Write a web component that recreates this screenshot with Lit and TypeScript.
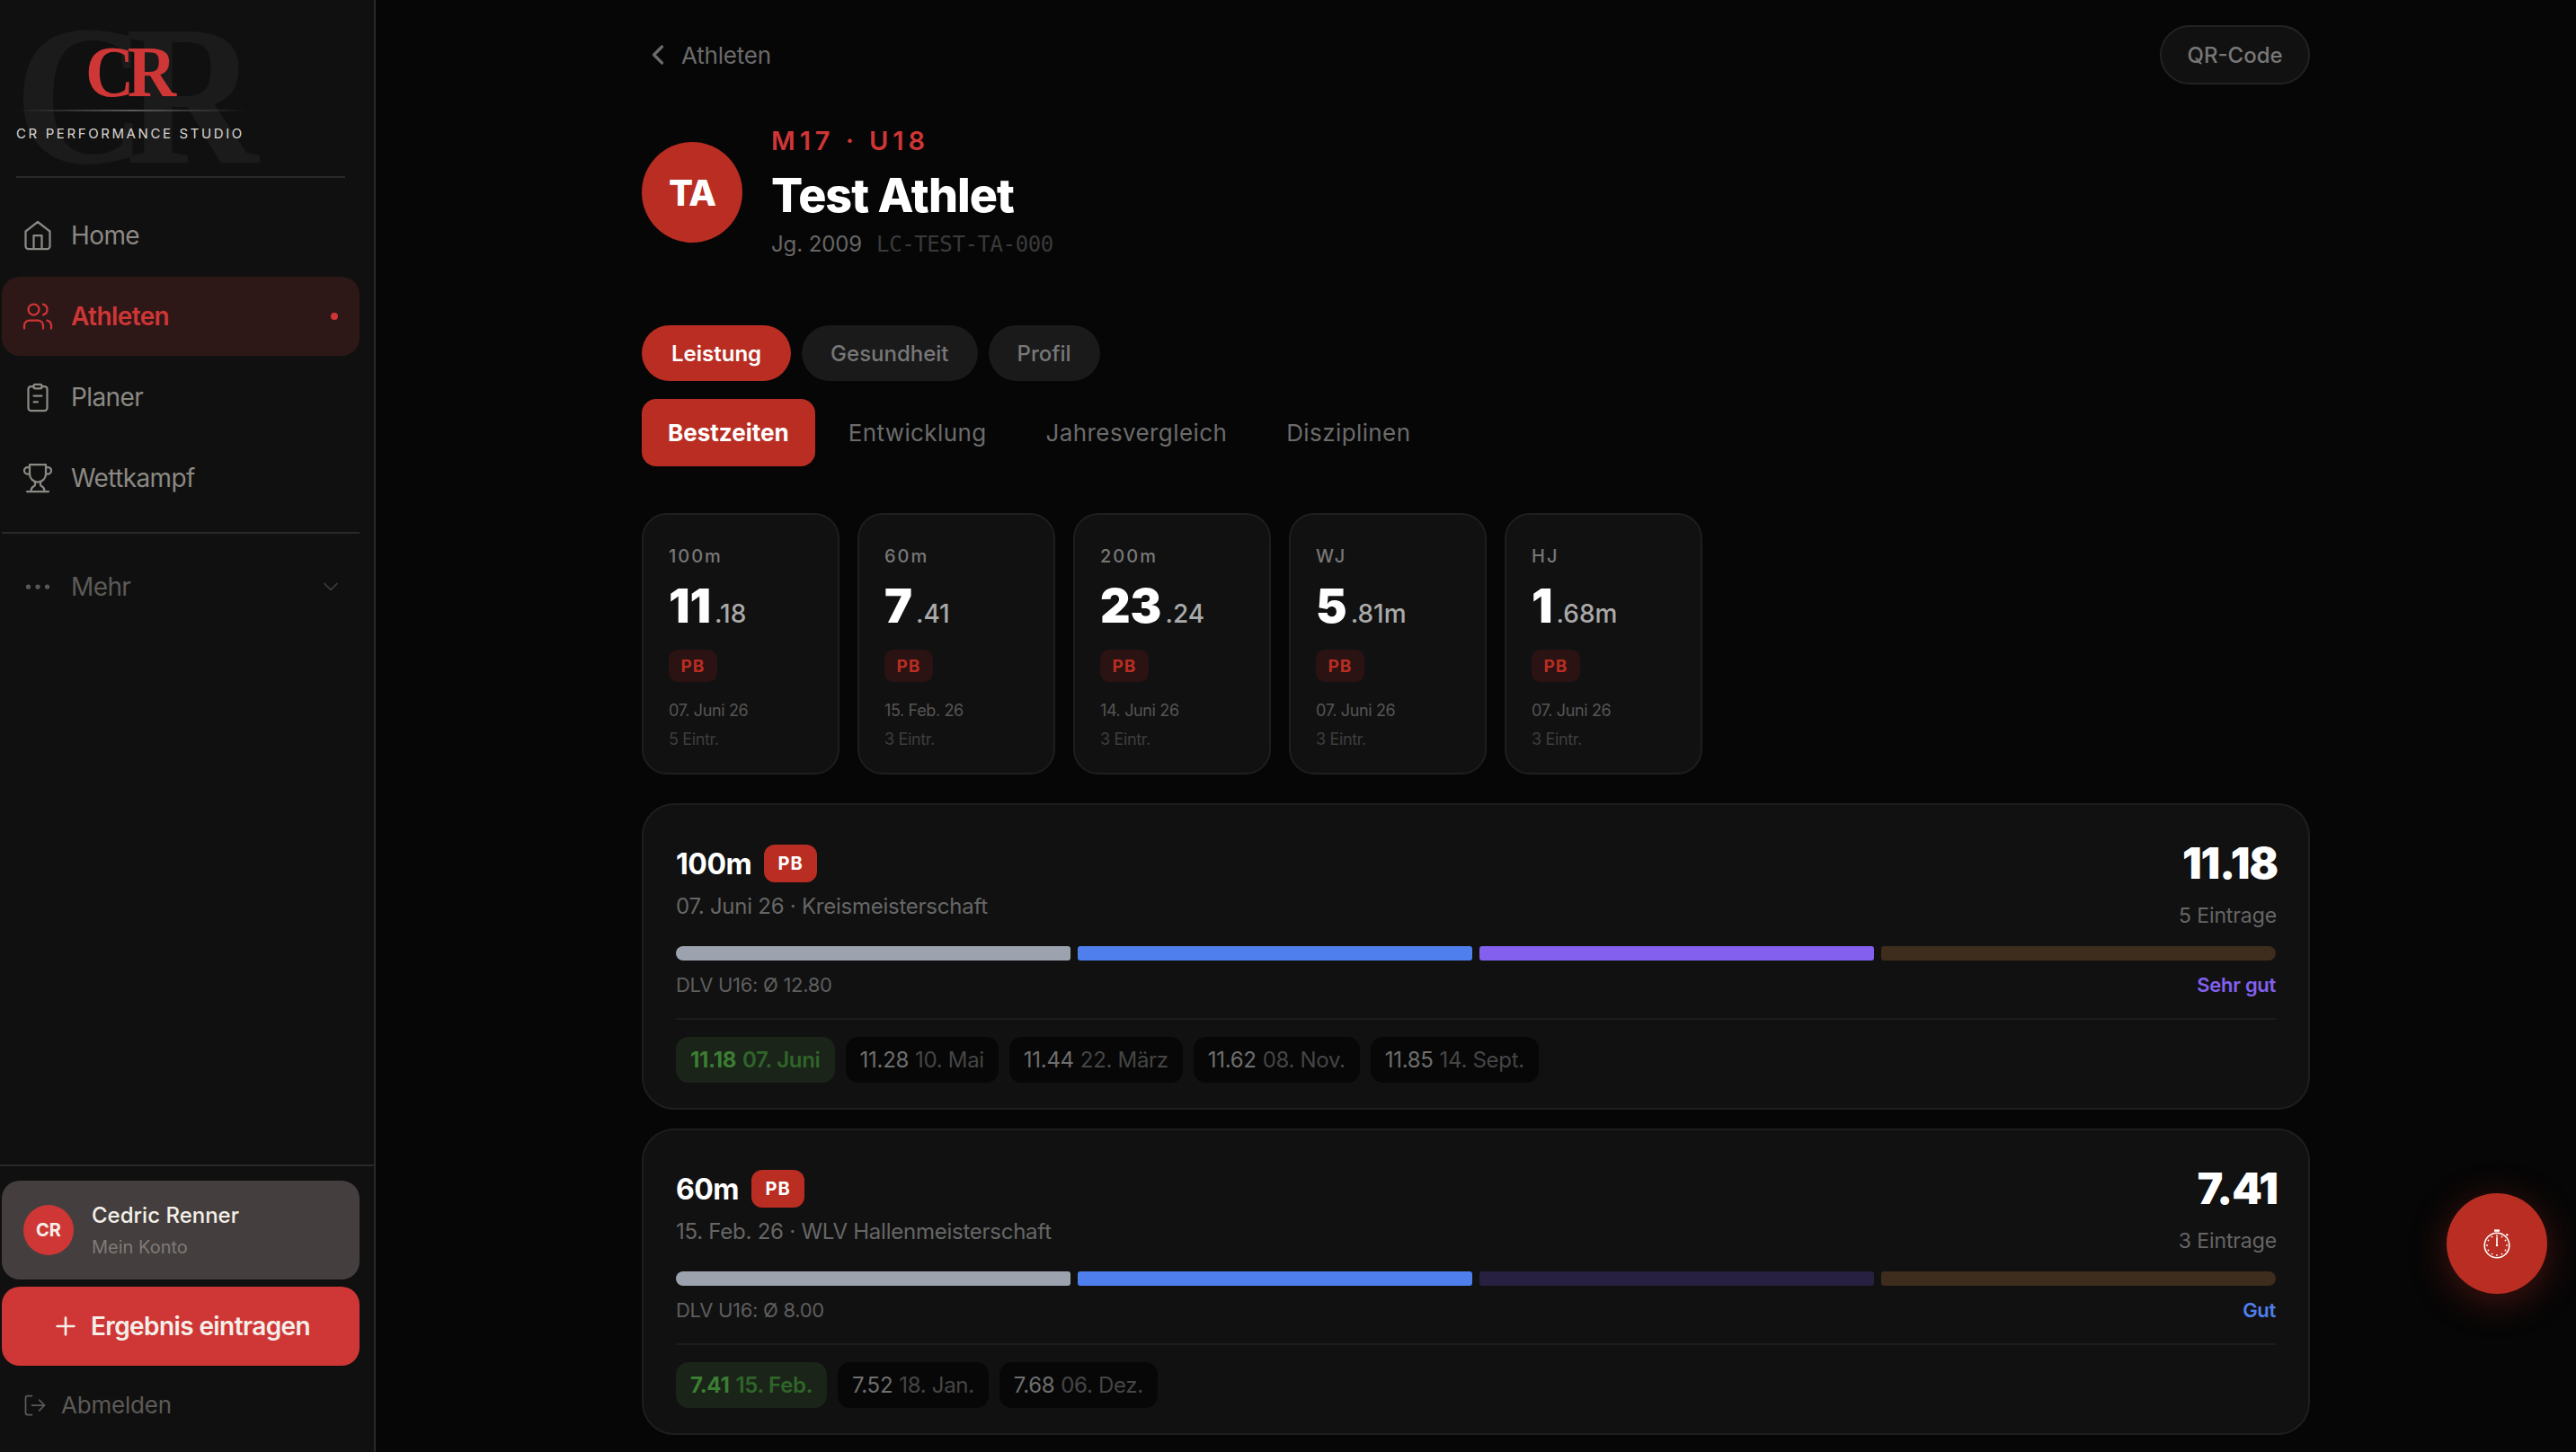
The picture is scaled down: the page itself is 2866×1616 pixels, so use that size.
import { LitElement, html, css, svg } from 'lit';
import { customElement, state } from 'lit/decorators.js';

const icon = (size: number, body: unknown, sw = 1.5) => html`<svg width=${size} height=${size} viewBox="0 0 24 24" fill="none" stroke="currentColor" stroke-width=${sw} stroke-linecap="round" stroke-linejoin="round">${body}</svg>`;

const icons = {
  home: svg`<path d="m3 9 9-7 9 7v11a2 2 0 0 1-2 2H5a2 2 0 0 1-2-2z"/><polyline points="9 22 9 12 15 12 15 22"/>`,
  users: svg`<path d="M16 21v-2a4 4 0 0 0-4-4H6a4 4 0 0 0-4 4v2"/><circle cx="9" cy="7" r="4"/><path d="M22 21v-2a4 4 0 0 0-3-3.87"/><path d="M16 3.13a4 4 0 0 1 0 7.75"/>`,
  clipboard: svg`<rect x="9" y="2.5" width="6" height="3" rx="1"/><path d="M15 4h2a2 2 0 0 1 2 2v14a2 2 0 0 1-2 2H7a2 2 0 0 1-2-2V6a2 2 0 0 1 2-2h2"/><path d="M9 11h6"/><path d="M9 15.5h3"/>`,
  trophy: svg`<path d="M6 9H4.5a2.5 2.5 0 0 1 0-5H6"/><path d="M18 9h1.5a2.5 2.5 0 0 0 0-5H18"/><path d="M4 22h16"/><path d="M10 14.66V17c0 .55-.47.98-.97 1.21C7.85 18.75 7 20.24 7 22"/><path d="M14 14.66V17c0 .55.47.98.97 1.21C16.15 18.75 17 20.24 17 22"/><path d="M18 2H6v7a6 6 0 0 0 12 0V2Z"/>`,
  dots: svg`<circle cx="5" cy="12" r="1"/><circle cx="12" cy="12" r="1"/><circle cx="19" cy="12" r="1"/>`,
  chevronDown: svg`<path d="m6 9 6 6 6-6"/>`,
  chevronLeft: svg`<path d="m15 18-6-6 6-6"/>`,
  plus: svg`<path d="M5 12h14"/><path d="M12 5v14"/>`,
  logout: svg`<path d="M9 21H5a2 2 0 0 1-2-2V5a2 2 0 0 1 2-2h4"/><polyline points="16 17 21 12 16 7"/><line x1="21" y1="12" x2="9" y2="12"/>`,
};

const navItems = [
  { label: 'Home', icon: icons.home },
  { label: 'Athleten', icon: icons.users, active: true },
  { label: 'Planer', icon: icons.clipboard },
  { label: 'Wettkampf', icon: icons.trophy },
];

const stats = [
  { label: '100m', main: '11', rest: '.18', date: '07. Juni 26', entries: '5 Eintr.' },
  { label: '60m', main: '7', rest: '.41', date: '15. Feb. 26', entries: '3 Eintr.' },
  { label: '200m', main: '23', rest: '.24', date: '14. Juni 26', entries: '3 Eintr.' },
  { label: 'WJ', main: '5', rest: '.81m', date: '07. Juni 26', entries: '3 Eintr.' },
  { label: 'HJ', main: '1', rest: '.68m', date: '07. Juni 26', entries: '3 Eintr.' },
];

const results = [
  {
    name: '100m', best: '11.18', sub: '07. Juni 26 · Kreismeisterschaft', entries: '5 Eintrage',
    norm: 'DLV U16: Ø 12.80', grade: 'Sehr gut', gradeColor: '#8360ee',
    bars: ['#9ca3af', '#4f7fec', '#8360ee', '#3e2d1c'],
    history: [['11.18', '07. Juni'], ['11.28', '10. Mai'], ['11.44', '22. März'], ['11.62', '08. Nov.'], ['11.85', '14. Sept.']],
  },
  {
    name: '60m', best: '7.41', sub: '15. Feb. 26 · WLV Hallenmeisterschaft', entries: '3 Eintrage',
    norm: 'DLV U16: Ø 8.00', grade: 'Gut', gradeColor: '#4f7fec',
    bars: ['#9ca3af', '#4f7fec', '#272040', '#3e2d1c'],
    history: [['7.41', '15. Feb.'], ['7.52', '18. Jan.'], ['7.68', '06. Dez.']],
  },
];

@customElement('app-root')
export class AppRoot extends LitElement {
  @state() section = 'Leistung';
  @state() tab = 'Bestzeiten';

  static styles = css`
    :host {
      display: flex;
      height: 100vh;
      overflow: hidden;
      background: #060606;
      font-family: Inter, "Noto Sans", sans-serif;
      color: #fff;
    }
    * { box-sizing: border-box; }
    svg { display: block; flex: none; }

    /* sidebar */
    .sidebar {
      width: 418px;
      flex: none;
      display: flex;
      flex-direction: column;
      background: #111010;
      border-right: 2px solid #2a2929;
    }
    .logo {
      position: relative;
      height: 198px;
      margin: 0 32px 0 18px;
      padding-top: 40px;
      border-bottom: 2px solid #2a2929;
    }
    .logo-ghost {
      position: absolute;
      left: -2px;
      top: -5px;
      font: 700 222px/1 "Liberation Serif", serif;
      letter-spacing: -26px;
      color: #1c1b1b;
      transform: scaleX(0.92);
      transform-origin: left;
    }
    .logo-mark {
      position: relative;
      margin-left: 77px;
      font: 700 80px/80px "Liberation Serif", serif;
      letter-spacing: -8px;
      color: #cf3636;
      transform: scaleX(0.94);
      transform-origin: left;
    }
    .logo-rule {
      position: relative;
      height: 2px;
      width: 256px;
      margin-top: 2px;
      background: linear-gradient(90deg, transparent, #5a5a5a 50%, transparent);
    }
    .logo-text {
      position: relative;
      margin-top: 15px;
      font-size: 15px;
      line-height: 20px;
      letter-spacing: 2.6px;
      color: #d8d6d2;
      white-space: nowrap;
    }
    nav {
      display: flex;
      flex-direction: column;
      gap: 2px;
      padding: 20px 16px 0 2px;
    }
    .nav-item {
      display: flex;
      align-items: center;
      gap: 19px;
      height: 88px;
      padding: 0 22px;
      border-radius: 20px;
      font-size: 28px;
      letter-spacing: -0.6px;
      color: #8b8983;
    }
    .nav-item.active {
      background: #2e1717;
      color: #cf3636;
      font-weight: 600;
    }
    .dot {
      width: 8px;
      height: 8px;
      margin-left: auto;
      margin-right: 2px;
      border-radius: 50%;
      background: #cf3636;
    }
    .nav-sep {
      height: 2px;
      margin: 16px 16px 0 2px;
      background: #2a2929;
    }
    .nav-more {
      margin: 15px 16px 0 2px;
      color: #5c5a57;
    }
    .nav-more .chev {
      margin-left: auto;
      margin-right: -4px;
      color: #3f3e3c;
    }
    .side-bottom {
      margin-top: auto;
      display: flex;
      flex-direction: column;
      gap: 8px;
      padding: 16px 16px 0 2px;
      height: 320px;
      border-top: 2px solid #2a2929;
    }
    .account {
      display: flex;
      align-items: center;
      gap: 20px;
      height: 110px;
      padding: 0 24px;
      border-radius: 20px;
      background: #443f3e;
    }
    .account-avatar {
      width: 56px;
      height: 56px;
      display: grid;
      place-items: center;
      border-radius: 50%;
      background: #cf3636;
      font-size: 20px;
      font-weight: 700;
      color: #f5efe9;
    }
    .account-name {
      font-size: 24px;
      line-height: 32px;
      font-weight: 500;
      color: #f5efe9;
    }
    .account-sub {
      margin-top: 6px;
      font-size: 20px;
      line-height: 26px;
      color: #7f7a77;
    }
    .add-btn {
      display: flex;
      align-items: center;
      justify-content: center;
      gap: 12px;
      height: 88px;
      border-radius: 20px;
      background: #cf3636;
      font-size: 28px;
      font-weight: 600;
      letter-spacing: -0.6px;
      color: #f5efe9;
    }
    .logout {
      display: flex;
      align-items: center;
      gap: 15px;
      padding: 20px 0 0 23px;
      font-size: 26px;
      letter-spacing: -0.2px;
      color: #5c5a57;
    }

    /* main */
    .main {
      flex: 1;
      min-width: 0;
      overflow: hidden;
    }
    .content {
      width: 1856px;
      margin: 0 auto;
      padding-top: 28px;
    }
    .topbar {
      display: flex;
      align-items: center;
      justify-content: space-between;
      height: 66px;
    }
    .back {
      display: flex;
      align-items: center;
      gap: 8px;
      font-size: 26px;
      letter-spacing: -0.2px;
      color: #6b6b6b;
    }
    .qr {
      display: grid;
      place-items: center;
      width: 167px;
      height: 66px;
      border: 2px solid #222;
      border-radius: 33px;
      background: #111;
      font-size: 24px;
      font-weight: 500;
      color: #777;
    }
    .athlete {
      display: flex;
      align-items: center;
      gap: 32px;
      margin-top: 64px;
      height: 112px;
    }
    .avatar {
      width: 112px;
      height: 112px;
      display: grid;
      place-items: center;
      border-radius: 50%;
      background: #b92d22;
      font-size: 40px;
      font-weight: 800;
      letter-spacing: -1px;
    }
    .class-line {
      font-size: 29px;
      line-height: 36px;
      font-weight: 600;
      letter-spacing: 4.9px;
      color: #cf3636;
      white-space: pre;
    }
    h1 {
      margin: 13px 0 0;
      font-size: 52px;
      line-height: 60px;
      font-weight: 800;
      letter-spacing: -1px;
    }
    .meta {
      display: flex;
      align-items: baseline;
      gap: 16px;
      margin-top: 7px;
      font-size: 24px;
      line-height: 34px;
      letter-spacing: -0.1px;
      color: #666;
    }
    .meta code {
      font: 24px "DejaVu Sans Mono", monospace;
      letter-spacing: -0.4px;
      color: #3a3a3a;
    }
    .pills {
      display: flex;
      gap: 12px;
      margin-top: 92px;
    }
    .pill {
      display: grid;
      place-items: center;
      height: 62px;
      padding: 0 32px;
      border-radius: 31px;
      background: #1a1a1a;
      font-size: 24px;
      font-weight: 500;
      color: #777;
    }
    .pill.active {
      padding: 0 33px;
      background: #b92d22;
      font-weight: 600;
      color: #fff;
    }
    .tabs {
      display: flex;
      gap: 8px;
      margin-top: 20px;
    }
    .tab {
      display: grid;
      place-items: center;
      height: 75px;
      padding: 0 29px;
      border-radius: 16px;
      font-size: 26px;
      letter-spacing: 0.4px;
      color: #6b6b6b;
    }
    .tab.active {
      background: #b92d22;
      font-weight: 700;
      letter-spacing: 0;
      color: #fff;
    }
    .stats {
      display: flex;
      gap: 20px;
      margin-top: 52px;
    }
    .stat {
      width: 220px;
      height: 291px;
      padding: 34px 26px 0 28px;
      border: 2px solid #1e1e1e;
      border-radius: 28px;
      background: #111;
    }
    .stat-label {
      font-size: 20px;
      line-height: 24px;
      font-weight: 500;
      letter-spacing: 2px;
      color: #777;
    }
    .stat-value {
      margin-top: 13px;
      font-size: 52px;
      line-height: 62px;
      font-weight: 900;
    }
    .stat-value span {
      margin-left: 4px;
      font-size: 28px;
      font-weight: 500;
      color: #aaa;
    }
    .stat-pb {
      display: grid;
      place-items: center;
      width: 54px;
      height: 36px;
      margin-top: 9px;
      border-radius: 10px;
      background: #2a1312;
      font-size: 19px;
      font-weight: 700;
      letter-spacing: 1px;
      color: #b92d22;
    }
    .stat-date {
      margin-top: 21px;
      font-size: 18px;
      line-height: 22px;
      letter-spacing: -0.36px;
      color: #555;
    }
    .stat-entries {
      margin-top: 10px;
      font-size: 18px;
      line-height: 22px;
      letter-spacing: -0.36px;
      color: #3e3e3e;
    }
    .result {
      margin-top: 32px;
      padding: 40px 36px 28px;
      border: 2px solid #1e1e1e;
      border-radius: 36px;
      background: #111;
    }
    .result + .result { margin-top: 21px; }
    .result-head {
      display: flex;
      justify-content: space-between;
    }
    .result-title {
      display: flex;
      align-items: center;
      gap: 14px;
      height: 50px;
      font-size: 32px;
      font-weight: 700;
      letter-spacing: -0.5px;
    }
    .result-pb {
      display: grid;
      place-items: center;
      width: 59px;
      height: 42px;
      border-radius: 12px;
      background: #b92d22;
      font-size: 20px;
      font-weight: 700;
      letter-spacing: 1px;
    }
    .result-sub {
      margin-top: 6px;
      font-size: 24px;
      line-height: 34px;
      letter-spacing: -0.25px;
      color: #666;
    }
    .result-best {
      height: 50px;
      margin-right: -2px;
      font-size: 48px;
      line-height: 50px;
      font-weight: 900;
      letter-spacing: -1px;
      text-align: right;
    }
    .result-entries {
      margin-top: 17px;
      margin-right: -1px;
      font-size: 23px;
      line-height: 32px;
      letter-spacing: -0.1px;
      color: #666;
      text-align: right;
    }
    .bars {
      display: flex;
      gap: 8px;
      margin-top: 18px;
    }
    .bar {
      flex: 1;
      height: 16px;
      border-radius: 3px;
    }
    .bar:first-child { border-radius: 8px 3px 3px 8px; }
    .bar:last-child { border-radius: 3px 8px 8px 3px; }
    .norm {
      display: flex;
      justify-content: space-between;
      align-items: center;
      height: 32px;
      margin-top: 11px;
      font-size: 22px;
      letter-spacing: -0.3px;
      color: #5e5e5e;
    }
    .norm b { font-weight: 600; }
    .history {
      display: flex;
      gap: 12px;
      margin-top: 21px;
      padding-top: 19px;
      border-top: 2px solid #1c1c1c;
    }
    .chip {
      display: flex;
      align-items: center;
      gap: 7px;
      height: 51px;
      padding: 0 16px;
      border-radius: 14px;
      background: #070707;
      font-size: 24px;
      letter-spacing: -0.3px;
      color: #6e6e6e;
    }
    .chip span { color: #454545; }
    .chip.best {
      background: #1a2418;
      font-weight: 700;
      color: #3b7d33;
    }
    .chip.best span { font-weight: 600; color: #2f6529; }
    .fab {
      position: fixed;
      left: 2722px;
      top: 1328px;
      width: 112px;
      height: 112px;
      display: grid;
      place-items: center;
      border-radius: 50%;
      background: #b92d22;
      box-shadow: 0 8px 40px rgba(185, 45, 34, 0.35);
    }
  `;

  private renderStopwatch() {
    // tick marks round the dial, every 30 degrees
    const ticks = Array.from({ length: 12 }, (_, i) => {
      const a = (i * Math.PI) / 6;
      return svg`<circle cx=${20 + 11 * Math.sin(a)} cy=${22 - 11 * Math.cos(a)} r="0.9" fill="#fff" stroke="none"/>`;
    });
    return html`<svg width="40" height="40" viewBox="0 0 40 40" fill="none" stroke="#fff">
      <circle cx="20" cy="22" r="13.8" stroke-width="1.6"/>
      <path d="M17 5.6h6" stroke-width="2.4"/>
      <path d="M30.5 9.5l1.6 1.6" stroke-width="2"/>
      <path d="M20 12.5v9.5" stroke-width="1.6"/>
      <circle cx="20" cy="22" r="1.2" fill="#fff" stroke="none"/>
      ${ticks}
    </svg>`;
  }

  private renderSidebar() {
    return html`<aside class="sidebar">
      <div class="logo">
        <div class="logo-ghost">CR</div>
        <div class="logo-mark">CR</div>
        <div class="logo-rule"></div>
        <div class="logo-text">CR PERFORMANCE STUDIO</div>
      </div>
      <nav>
        ${navItems.map((n) => html`<div class="nav-item ${n.active ? 'active' : ''}">
          ${icon(36, n.icon)}<span>${n.label}</span>
          ${n.active ? html`<i class="dot"></i>` : ''}
        </div>`)}
      </nav>
      <div class="nav-sep"></div>
      <div class="nav-item nav-more">
        ${icon(36, icons.dots)}<span>Mehr</span>
        <span class="chev">${icon(28, icons.chevronDown)}</span>
      </div>
      <div class="side-bottom">
        <div class="account">
          <div class="account-avatar">CR</div>
          <div>
            <div class="account-name">Cedric Renner</div>
            <div class="account-sub">Mein Konto</div>
          </div>
        </div>
        <div class="add-btn">${icon(32, icons.plus, 2)}<span>Ergebnis eintragen</span></div>
        <div class="logout">${icon(28, icons.logout)}<span>Abmelden</span></div>
      </div>
    </aside>`;
  }

  render() {
    return html`
      ${this.renderSidebar()}
      <main class="main">
        <div class="content">
          <div class="topbar">
            <div class="back">${icon(36, icons.chevronLeft, 2.2)}<span>Athleten</span></div>
            <div class="qr">QR-Code</div>
          </div>
          <div class="athlete">
            <div class="avatar">TA</div>
            <div>
              <div class="class-line">M17 · U18</div>
              <h1>Test Athlet</h1>
              <div class="meta"><span>Jg. 2009</span><code>LC-TEST-TA-000</code></div>
            </div>
          </div>
          <div class="pills">
            ${['Leistung', 'Gesundheit', 'Profil'].map((p) => html`<div class="pill ${p === this.section ? 'active' : ''}">${p}</div>`)}
          </div>
          <div class="tabs">
            ${['Bestzeiten', 'Entwicklung', 'Jahresvergleich', 'Disziplinen'].map((t) => html`<div class="tab ${t === this.tab ? 'active' : ''}">${t}</div>`)}
          </div>
          <div class="stats">
            ${stats.map((s) => html`<div class="stat">
              <div class="stat-label">${s.label}</div>
              <div class="stat-value">${s.main}<span>${s.rest}</span></div>
              <div class="stat-pb">PB</div>
              <div class="stat-date">${s.date}</div>
              <div class="stat-entries">${s.entries}</div>
            </div>`)}
          </div>
          ${results.map((r) => html`<section class="result">
            <div class="result-head">
              <div>
                <div class="result-title">${r.name}<span class="result-pb">PB</span></div>
                <div class="result-sub">${r.sub}</div>
              </div>
              <div>
                <div class="result-best">${r.best}</div>
                <div class="result-entries">${r.entries}</div>
              </div>
            </div>
            <div class="bars">
              ${r.bars.map((c) => html`<div class="bar" style="background:${c}"></div>`)}
            </div>
            <div class="norm"><span>${r.norm}</span><b style="color:${r.gradeColor}">${r.grade}</b></div>
            <div class="history">
              ${r.history.map((h, i) => html`<div class="chip ${i === 0 ? 'best' : ''}">${h[0]}<span>${h[1]}</span></div>`)}
            </div>
          </section>`)}
        </div>
      </main>
      <div class="fab">${this.renderStopwatch()}</div>
    `;
  }
}
